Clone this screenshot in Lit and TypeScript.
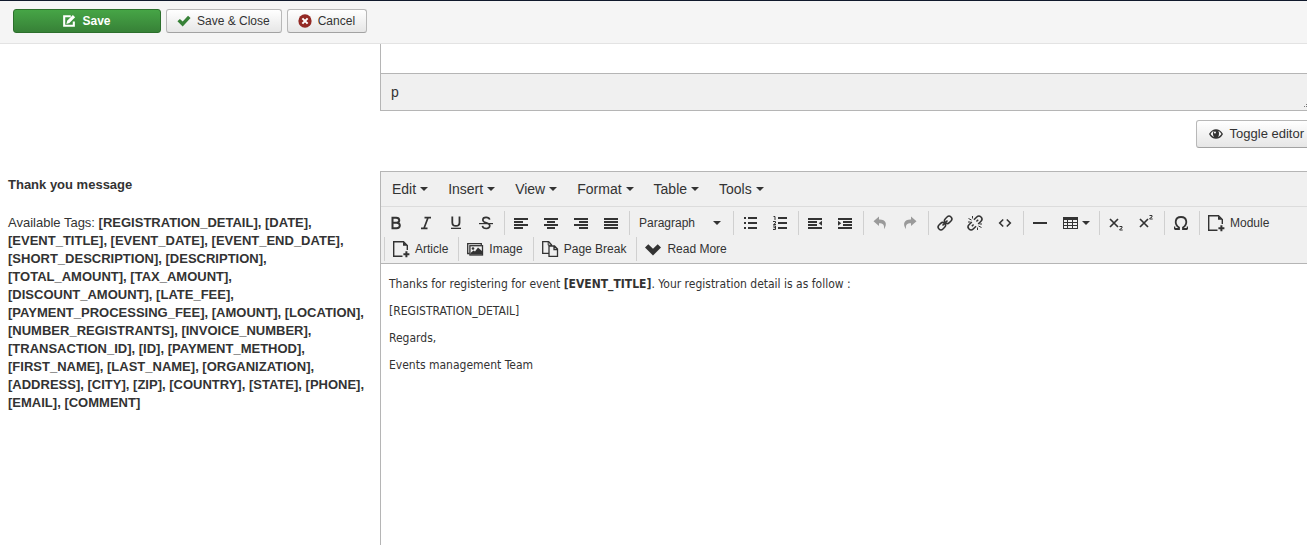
import { LitElement, html, css, svg, TemplateResult } from "lit";
import { customElement, property } from "lit/decorators.js";

const icons: Record<string, TemplateResult> = {
  edit: svg`<path d="M10 2.5H2.5v11h11V8.500" fill="none" stroke="currentColor" stroke-width="2.400"/><path d="M5 11.500l.9-3.800L12.400 1.200l2.600 2.600-6.500 6.500z"/>`,
  check: svg`<path d="M.5 8.400l2.800-2.800 3.200 3L12.600 2l2.900 2.600-9 9.600z"/>`,
  cancel: svg`<circle cx="8" cy="8" r="7.600"/><path d="M5 5l6 6M11 5l-6 6" stroke="#fff" stroke-width="2.400"/>`,
  eye: svg`<path d="M0 8C2 4.200 4.800 2.500 8 2.500s6 1.700 8 5.500c-2 3.800-4.800 5.500-8 5.500S2 11.800 0 8z"/><path d="M1.800 8C3 6 4.200 5 5.300 4.600 4.300 6 4.200 9.500 5.600 11.300 4.200 10.800 2.900 9.800 1.800 8zM14.200 8c-1.200-2-2.400-3-3.500-3.400 1 1.400 1.100 4.900-.300 6.700 1.400-.500 2.700-1.500 3.800-3.300z" fill="#f5f5f5"/><circle cx="6.800" cy="6.300" r="1.200" fill="#f5f5f5"/>`,
  bold: svg`<path d="M4.500 2.800h3.700c4 0 4 4.900.400 5 4.300.1 4.300 5.400-.1 5.400h-4zM4.800 7.800h3.800" fill="none" stroke="currentColor" stroke-width="2"/>`,
  italic: svg`<path d="M6.500 2.700h6.500M3 13.300h6.500M10 2.700L6 13.300" fill="none" stroke="currentColor" stroke-width="1.700"/>`,
  underline: svg`<path d="M4.300 1.500V7.500c0 4.600 7.200 4.600 7.200 0V1.500" fill="none" stroke="currentColor" stroke-width="1.800"/><path d="M3 12.700h10v1.300H3z"/>`,
  strike: svg`<path d="M11.700 4.600C11 1.600 4.800 1.600 4.800 4.900c0 3.600 7 2.200 7 5.900 0 3.500-6.800 3.500-7.400 0" fill="none" stroke="currentColor" stroke-width="1.600"/><path d="M1 8h14v1.200H1z"/>`,
  left: svg`<path d="M1 3h14v2H1zM1 6h9v2H1zM1 9h14v2H1zM1 12h9v2H1z"/>`,
  center: svg`<path d="M1 3h14v2H1zM4 6h8v2H4zM1 9h14v2H1zM4 12h8v2H4z"/>`,
  right: svg`<path d="M1 3h14v2H1zM6 6h9v2H6zM1 9h14v2H1zM6 12h9v2H6z"/>`,
  justify: svg`<path d="M1 3h14v2H1zM1 6h14v2H1zM1 9h14v2H1zM1 12h14v2H1z"/>`,
  bullets: svg`<path d="M6 2h9v2H6zM6 7h9v2H6zM6 12h9v2H6zM2 2h2v2H2zM2 7h2v2H2zM2 12h2v2H2z"/>`,
  numbers: svg`<path d="M6 2h9v2H6zM6 7h9v2H6zM6 12h9v2H6z"/><path d="M1.500 1.500H3V5M1 6.500h2.500V8L1.500 9.500H4M1 11h2.500v3.500H1M1.500 12.700H3.500" fill="none" stroke="currentColor" stroke-width="1"/>`,
  outdent: svg`<path d="M1 3h14v2H1zM1 6h9v2H1zM1 9h9v2H1zM1 12h14v2H1zM15 5.800v5L11.700 8.300z"/>`,
  indent: svg`<path d="M1 3h14v2H1zM6 6h9v2H6zM6 9h9v2H6zM1 12h14v2H1zM1 5.800v5l3.300-2.500z"/>`,
  undo: svg`<path d="M1.500 6.200L7 1.500v3c6.800-.300 8.800 4.300 5 9.700.500-4.600-.800-6-5-6V11z"/>`,
  redo: svg`<path d="M14.500 6.200L9 1.500v3c-6.800-.300-8.800 4.300-5 9.700-.500-4.600.8-6 5-6V11z"/>`,
  link: svg`<g transform="rotate(-45 8 8)" fill="none" stroke="currentColor" stroke-width="1.500"><rect x="-.5" y="5.200" width="8" height="5.600" rx="2.800"/><rect x="8.500" y="5.200" width="8" height="5.600" rx="2.800"/><path d="M4.500 8h7" stroke-width="1.600"/></g>`,
  unlink: svg`<g transform="rotate(-45 8 8)" fill="none" stroke="currentColor" stroke-width="1.500"><path d="M6.500 5h-4c-4 0-4 6 0 6h4M9.500 5h4c4 0 4 6 0 6h-4M3.500 8h2.500M10 8h2.500"/></g><path d="M5.500 1v2.500M1.500 3.500l3 1.500M1 7h2.500M10.500 15v-2.500M14.500 12.500l-3-1.500M15 9h-2.500" stroke="currentColor" stroke-width="1"/>`,
  code: svg`<path d="M6.200 4.500L2.700 8l3.500 3.500M9.800 4.500L13.300 8l-3.500 3.500" fill="none" stroke="currentColor" stroke-width="1.600"/>`,
  rule: svg`<path d="M1 7h14v2H1z"/>`,
  table: svg`<path d="M1 2h15v12H1z"/><path d="M2 5h3v2H2zM6 5h4v2H6zM11 5h4v2h-4zM2 8h3v2H2zM6 8h4v2H6zM11 8h4v2h-4zM2 11h3v2H2zM6 11h4v2H6zM11 11h4v2h-4z" fill="#f0f0f0"/>`,
  sub: svg`<path d="M2 4l8 8M10 4l-8 8" fill="none" stroke="currentColor" stroke-width="1.700"/><path d="M11.500 11.500h2.500v1.500l-2.300 1.500v.500h3" fill="none" stroke="currentColor" stroke-width="1"/>`,
  sup: svg`<path d="M2 4l8 8M10 4l-8 8" fill="none" stroke="currentColor" stroke-width="1.700"/><path d="M11.500 .5h2.500v1.500l-2.300 1.500v.500h3" fill="none" stroke="currentColor" stroke-width="1"/>`,
  omega: svg`<path d="M1.500 14h4.500v-1.500C1.200 9.500 1.500 2 8 2s6.800 7.500 2 10.500V14h4.500" fill="none" stroke="currentColor" stroke-width="1.800"/><path d="M1 11.500h1.300V14H1zM13.700 11.500H15V14h-1.300z"/>`,
  fileadd: svg`<path d="M9.500 15.300H.7V.7h9.800l3.800 3.800V9" fill="none" stroke="currentColor" stroke-width="1.400"/><path d="M10 .7v4h4.300z"/><path d="M10.400 13.200h6M13.400 10.200v6" stroke="currentColor" stroke-width="2"/>`,
  picture: svg`<path d="M2.500 12.500H.7V2.700h13.600V4" fill="none" stroke="currentColor" stroke-width="1.300"/><rect x="2.900" y="4.700" width="12.600" height="9.300" fill="none" stroke="currentColor" stroke-width="1.300"/><circle cx="6" cy="7.500" r="1.300"/><path d="M3.500 13.500v-1.500l3-2.500 1.500 1 3-4 4.500 4v3z"/>`,
  copy: svg`<path d="M7 12.300H.7V.7h6l2.800 3V5" fill="none" stroke="currentColor" stroke-width="1.300"/><path d="M6.200 .7v3.500h3.300" fill="none" stroke="currentColor"/><path d="M7 5h5.500l3 3v7.300H7zM12 5v3.500h3.500" fill="none" stroke="currentColor" stroke-width="1.300"/>`,
  chevron: svg`<path d="M0 6.600L3.300 3.300 8 7.700l4.700-4.400L16 6.600l-8 8z"/>`,
};

@customElement("ui-icon")
class UiIcon extends LitElement {
  static styles = css`
    :host { display: inline-flex; flex: none; width: 16px; height: 16px; }
    svg { width: 100%; height: 100%; fill: currentColor; overflow: visible; }
  `;
  @property() name = "";
  render() {
    return html`<svg viewBox="0 0 16 16" aria-hidden="true">${icons[this.name]}</svg>`;
  }
}

type Tool = { icon: string; label: string; text?: boolean; menu?: boolean; disabled?: boolean };
const tool = (icon: string, label: string, extra: Partial<Tool> = {}): Tool => ({ icon, label, ...extra });

const groups: (Tool[] | "format")[] = [
  [tool("bold", "Bold"), tool("italic", "Italic"), tool("underline", "Underline"), tool("strike", "Strikethrough")],
  [tool("left", "Align left"), tool("center", "Align center"), tool("right", "Align right"), tool("justify", "Justify")],
  "format",
  [tool("bullets", "Bullet list"), tool("numbers", "Numbered list")],
  [tool("outdent", "Decrease indent"), tool("indent", "Increase indent")],
  [tool("undo", "Undo", { disabled: true }), tool("redo", "Redo", { disabled: true })],
  [tool("link", "Insert link"), tool("unlink", "Remove link"), tool("code", "Source code")],
  [tool("rule", "Horizontal line"), tool("table", "Table", { menu: true })],
  [tool("sub", "Subscript"), tool("sup", "Superscript")],
  [tool("omega", "Special character")],
  [tool("fileadd", "Module", { text: true })],
  [tool("fileadd", "Article", { text: true })],
  [tool("picture", "Image", { text: true })],
  [tool("copy", "Page Break", { text: true })],
  [tool("chevron", "Read More", { text: true })],
];

const tags = [
  "REGISTRATION_DETAIL", "DATE", "EVENT_TITLE", "EVENT_DATE", "EVENT_END_DATE", "SHORT_DESCRIPTION",
  "DESCRIPTION", "TOTAL_AMOUNT", "TAX_AMOUNT", "DISCOUNT_AMOUNT", "LATE_FEE", "PAYMENT_PROCESSING_FEE",
  "AMOUNT", "LOCATION", "NUMBER_REGISTRANTS", "INVOICE_NUMBER", "TRANSACTION_ID", "ID", "PAYMENT_METHOD",
  "FIRST_NAME", "LAST_NAME", "ORGANIZATION", "ADDRESS", "CITY", "ZIP", "COUNTRY", "STATE", "PHONE",
  "EMAIL", "COMMENT",
];

@customElement("message-editor")
class MessageEditor extends LitElement {
  static styles = css`
    :host { display: flex; flex-direction: column; border: 1px solid #b5b5b5; background: #fff; }
    button, select { font: inherit; color: inherit; border: 0; background: none; margin: 0; }
    .menubar { display: flex; height: 34px; padding: 0 1px; background: #f0f0f0; border-bottom: 1px solid #dcdcdc; font-size: 14px; }
    .menu { display: flex; align-items: center; gap: 4px; padding: 0 10px; }
    .caret { width: 0; border: 4px solid transparent; border-top-color: #333; border-bottom: 0; }
    .toolbar { display: flex; flex-wrap: wrap; row-gap: 2px; padding: 4px 0 2px; background: #f0f0f0; border-bottom: 1px solid #b5b5b5; font-size: 12px; }
    .group { display: flex; height: 24px; margin-left: 3px; padding-left: 1px; border-left: 1px solid #d0d0d0; }
    .group:first-child { margin-left: 0; padding-left: 0; border-left: 0; }
    .tool { display: flex; align-items: center; justify-content: center; width: 30px; padding: 0; }
    .tool.menued { width: 41px; gap: 4px; }
    .tool.labelled { width: auto; gap: 6px; padding: 0 7px; }
    .tool:disabled { color: #9a9a9a; }
    .format { display: flex; align-items: center; width: 99px; padding-right: 9px; box-sizing: border-box; }
    .select { flex: 1; appearance: none; padding: 0 0 0 8px; }
    .content { flex: 1; padding: 11px 8px; outline: 0; font: 12px/18px "DejaVu Sans Condensed", "Noto Sans", sans-serif; }
    .para { margin: 0 0 9px; }
  `;
  renderTool(t: Tool) {
    const kind = t.text ? "labelled" : t.menu ? "menued" : "";
    return html`<button class="tool ${kind}" type="button" aria-label=${t.label} ?disabled=${t.disabled}>
      <ui-icon name=${t.icon}></ui-icon>${t.text ? html`<span>${t.label}</span>` : ""}${t.menu ? html`<i class="caret"></i>` : ""}
    </button>`;
  }
  render() {
    return html`
      <div class="menubar">
        ${["Edit", "Insert", "View", "Format", "Table", "Tools"].map(
          (m) => html`<button class="menu" type="button" aria-haspopup="true">${m}<i class="caret"></i></button>`
        )}
      </div>
      <div class="toolbar">
        ${groups.map((g) => html`<div class="group">${g === "format"
          ? html`<label class="format"><select class="select" aria-label="Block format"><option>Paragraph</option></select><i class="caret"></i></label>`
          : g.map((t) => this.renderTool(t))}</div>`)}
      </div>
      <div class="content" contenteditable="true" role="textbox" aria-multiline="true" aria-label="Thank you message">
        <p class="para">Thanks for registering for event <b>[EVENT_TITLE]</b>. Your registration detail is as follow :</p>
        <p class="para">[REGISTRATION_DETAIL]</p>
        <p class="para">Regards,</p>
        <p class="para">Events management Team</p>
      </div>`;
  }
}

@customElement("app-root")
class AppRoot extends LitElement {
  static styles = css`
    :host { display: flex; flex-direction: column; height: 100vh; overflow: hidden; background: #fff; color: #333; font: 13px/18px "Liberation Sans", Arial, sans-serif; }
    .actions { display: flex; gap: 5px; padding: 8px 13px 10px; background: #f5f5f5; border-top: 1px solid #10192c; border-bottom: 1px solid #e3e3e3; }
    .btn { display: flex; align-items: center; justify-content: center; gap: 6px; box-sizing: border-box; height: 24px; padding: 0 11px 0 10px; border: 1px solid #b8b8b8; border-bottom-color: #a2a2a2; border-radius: 3px; background: linear-gradient(#fff, #e6e6e6); color: #333; font: 12px/18px "Liberation Sans", Arial, sans-serif; }
    .btn ui-icon { width: 14px; height: 14px; }
    .save { width: 148px; border-color: #2c6f2c; background: linear-gradient(#46a546, #378137); color: #fff; font-weight: bold; }
    .ok { color: #378137; }
    .no { color: #942a25; }
    .toggle { height: 28px; padding: 0 13px 0 12px; gap: 7px; font-size: 13px; }
    .form { flex: 1; display: grid; grid-template-columns: 380px 1fr; grid-template-rows: auto 1fr; margin: 0 -12px -12px 0; }
    .previous { grid-column: 2; }
    .tail { height: 29px; border-left: 1px solid #b5b5b5; }
    .status { display: flex; align-items: center; justify-content: space-between; height: 36px; padding: 0 4px 0 10px; border: 1px solid #b5b5b5; background: #f0f0f0; font-size: 14px; }
    .grip { align-self: flex-end; width: 12px; height: 8px; fill: #777; }
    .below { display: flex; justify-content: flex-end; padding: 9px 1px 23px 0; }
    .info { padding: 5px 12px 0 8px; }
    .title { margin: 0 0 20px; font: inherit; font-weight: bold; }
    .tags { margin: 0; }
  `;
  render() {
    return html`
      <header class="actions">
        <button class="btn save" type="button"><ui-icon name="edit"></ui-icon>Save</button>
        <button class="btn" type="button"><ui-icon class="ok" name="check"></ui-icon>Save &amp; Close</button>
        <button class="btn" type="button"><ui-icon class="no" name="cancel"></ui-icon>Cancel</button>
      </header>
      <main class="form">
        <section class="previous">
          <div class="tail"></div>
          <div class="status">p<svg class="grip" viewBox="0 0 12 8" aria-hidden="true"><path d="M2 4h1v1H2zM4 2h1v1H4zM4 4h1v1H4zM6 0h1v1H6zM6 2h1v1H6zM6 4h1v1H6z"/></svg></div>
          <div class="below"><button class="btn toggle" type="button"><ui-icon name="eye"></ui-icon>Toggle editor</button></div>
        </section>
        <section class="info">
          <h2 class="title">Thank you message</h2>
          <p class="tags">Available Tags: ${tags.map((t, i) => html`<b>[${t}]${i < tags.length - 1 ? ", " : ""}</b>`)}</p>
        </section>
        <message-editor></message-editor>
      </main>`;
  }
}
